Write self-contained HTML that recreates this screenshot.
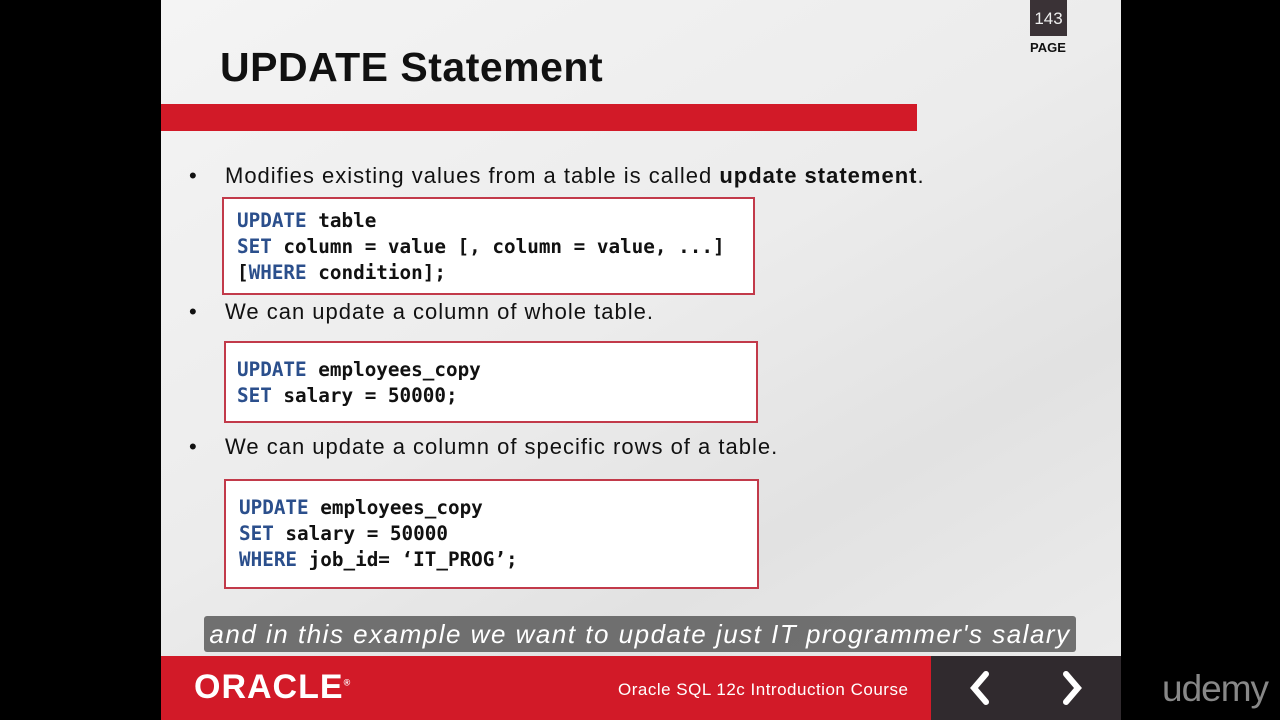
<!DOCTYPE html>
<html><head><style>
body{margin:0;width:1280px;height:720px;background:#000;position:relative;overflow:hidden;font-family:"Liberation Sans",sans-serif}
.slide{position:absolute;left:161px;top:0;width:960px;height:720px;background:linear-gradient(150deg,#f4f4f4 0%,#ececec 45%,#e2e2e2 70%,#ededed 100%);overflow:hidden}
.title{position:absolute;left:59px;top:44px;font-size:41px;font-weight:bold;color:#111;letter-spacing:0.5px}
.bar{position:absolute;left:0;top:104px;width:756px;height:27px;background:#d21a28}
.pg{position:absolute;left:869px;top:0;width:37px;height:36px;background:#3a3236;color:#eee;font-size:17px;text-align:center;line-height:38px}
.pgl{position:absolute;left:869px;top:40px;width:40px;font-size:13px;font-weight:bold;color:#111}
.b{position:absolute;left:28px;font-size:22px;color:#111;letter-spacing:1px}
.b span{position:absolute;left:36px;white-space:nowrap}
.code{position:absolute;border:2px solid #c23a4a;background:#fff;font-family:"DejaVu Sans Mono","Liberation Mono",monospace;font-size:19.3px;font-weight:bold;line-height:26px;color:#111;box-sizing:border-box;padding-left:13px;white-space:nowrap}
.k{color:#2b4f8c}
.cap{position:absolute;left:204px;top:616px;width:872px;height:36px;background:rgba(90,90,90,.85);border-radius:3px;color:#fff;font-size:26px;font-style:italic;line-height:36px;text-align:center;letter-spacing:1.5px;white-space:nowrap}
.foot{position:absolute;left:161px;top:656px;width:770px;height:64px;background:#d21a28}
.dark{position:absolute;left:931px;top:656px;width:190px;height:64px;background:#302a2e}
</style></head><body>
<div class="slide">
<div class="title">UPDATE Statement</div>
<div class="bar"></div>
<div class="pg">143</div><div class="pgl">PAGE</div>
<div class="b" style="top:163px">•<span>Modifies existing values from a table is called <b>update statement</b>.</span></div>
<div class="code" style="left:61px;top:197px;width:533px;height:98px;padding-top:9px"><span class="k">UPDATE</span> table<br><span class="k">SET</span> column = value [, column = value, ...]<br>[<span class="k">WHERE</span> condition];</div>
<div class="b" style="top:299px">•<span>We can update a column of whole table.</span></div>
<div class="code" style="left:63px;top:341px;width:534px;height:82px;padding-top:14px;padding-left:11px"><span class="k">UPDATE</span> employees_copy<br><span class="k">SET</span> salary = 50000;</div>
<div class="b" style="top:434px">•<span>We can update a column of specific rows of a table.</span></div>
<div class="code" style="left:63px;top:479px;width:535px;height:110px;padding-top:14px"><span class="k">UPDATE</span> employees_copy<br><span class="k">SET</span> salary = 50000<br><span class="k">WHERE</span> job_id= ‘IT_PROG’;</div>
</div>
<div class="foot"></div>
<div class="dark"></div>
<div style="position:absolute;left:194px;top:668px;color:#fff;font-size:34px;letter-spacing:1px;font-weight:bold">ORACLE<sup style="font-size:9px">®</sup></div>
<div style="position:absolute;left:618px;top:680px;color:#fff;font-size:17px;letter-spacing:0.5px">Oracle SQL 12c Introduction Course</div>
<svg style="position:absolute;left:960px;top:670px" width="130" height="36"><path d="M26 4 L14 18 L26 32" stroke="#fff" stroke-width="6" fill="none" stroke-linecap="round"/><path d="M106 4 L118 18 L106 32" stroke="#fff" stroke-width="6" fill="none" stroke-linecap="round"/></svg>
<div style="position:absolute;left:1162px;top:668px;color:#888;font-size:37px;letter-spacing:-1px">udemy</div>
<div class="cap">and in this example we want to update just IT programmer's salary</div>
</body></html>
